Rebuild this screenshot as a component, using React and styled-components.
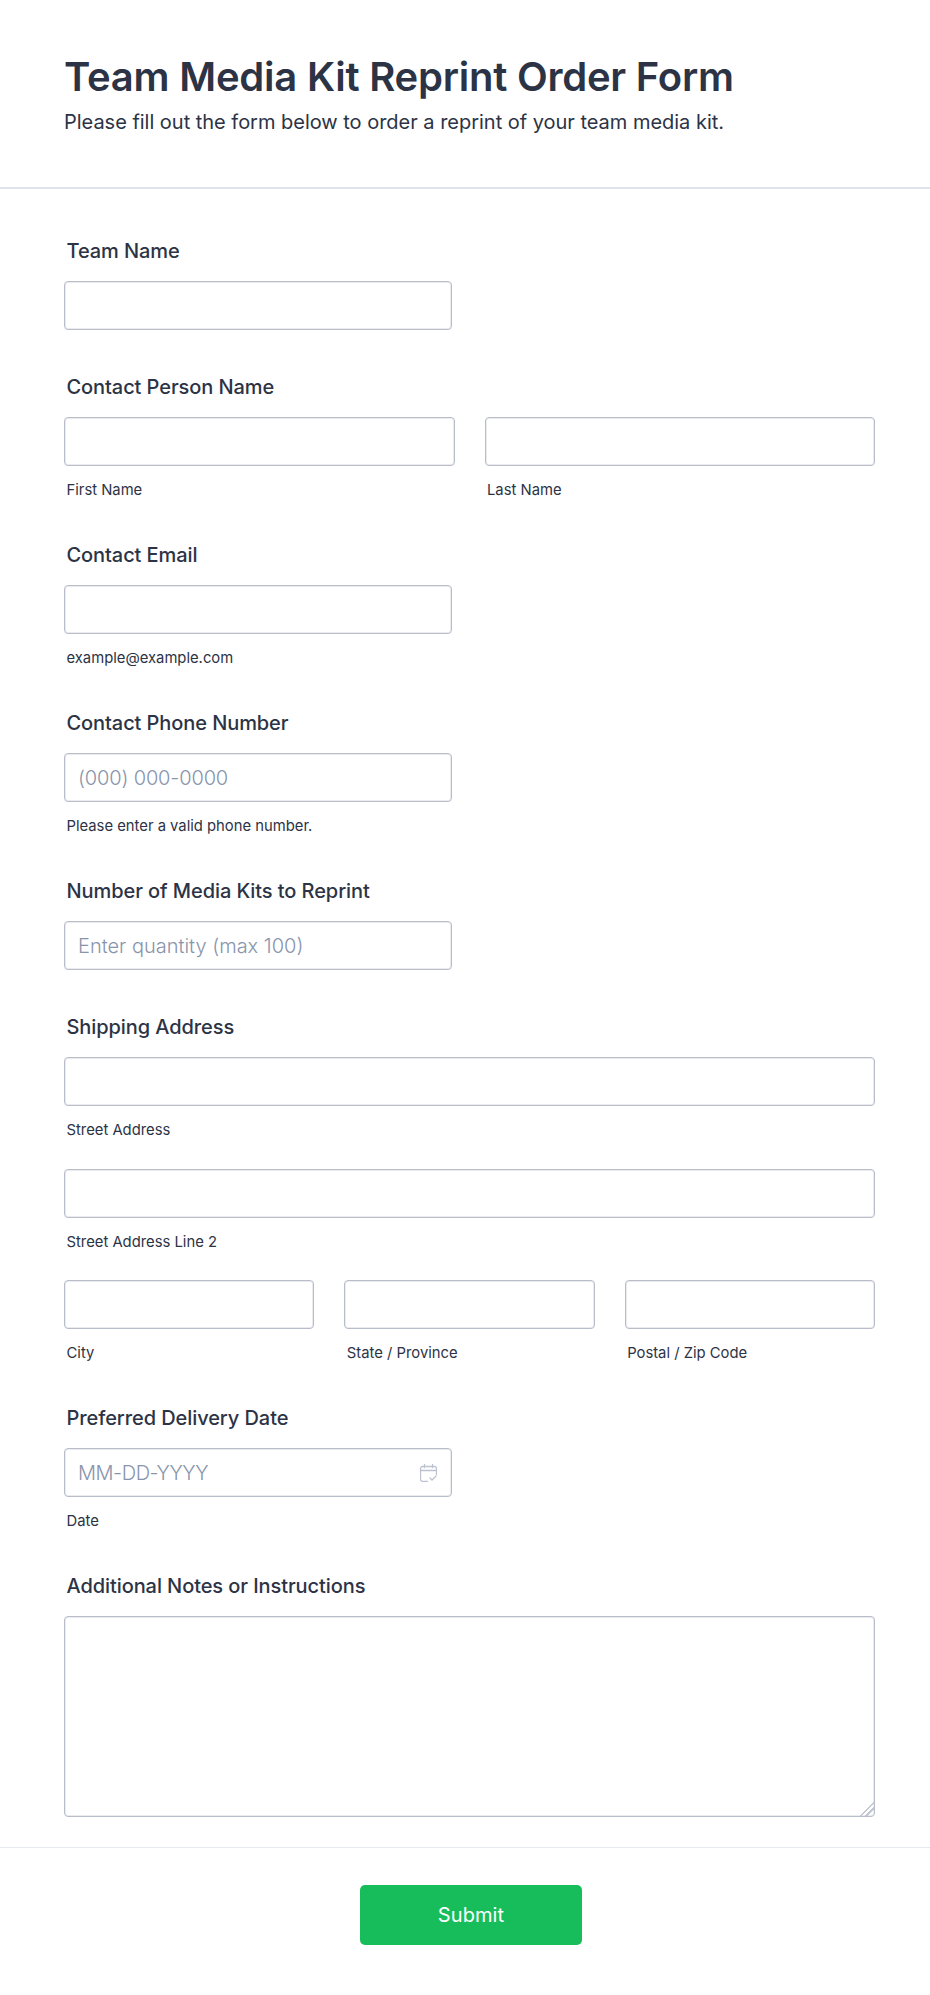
import React from "react";
import styled, { createGlobalStyle } from "styled-components";

const GlobalStyle = createGlobalStyle`
  * {
    box-sizing: border-box;
  }
  body {
    margin: 0;
    background: #fff;
    font-family: Inter, "Liberation Sans", sans-serif;
    color: #2c3345;
  }
`;

const Page = styled.div`
  display: flex;
  flex-direction: column;
  width: 100%;
  min-height: 1995px;
`;

const Header = styled.header`
  padding: 52px 55px 54px 64px;
  border-bottom: 2px solid #e0e2ec;
`;

const Title = styled.h1`
  margin: 0;
  font-size: 40px;
  line-height: 50px;
  font-weight: 600;
  letter-spacing: -0.23px;
`;

const Subtitle = styled.p`
  margin: 9px 0 0;
  font-size: 20px;
  line-height: 22px;
  font-weight: 400;
  letter-spacing: -0.02px;
`;

const Body = styled.main`
  display: flex;
  flex-direction: column;
  gap: 45px;
  padding: 50px 55px 30px 64px;
`;

const Field = styled.section`
  display: flex;
  flex-direction: column;
`;

const Label = styled.label`
  margin: 0 0 17px 2.5px;
  font-size: 20px;
  line-height: 25px;
  font-weight: 500;
  letter-spacing: -0.08px;
`;

const Row = styled.div`
  display: grid;
  grid-template-columns: repeat(${(p) => p.$cols}, 1fr);
  column-gap: 30px;
`;

const Stack = styled.div`
  display: flex;
  flex-direction: column;
  gap: 30.5px;
`;

const Cell = styled.div`
  display: flex;
  flex-direction: column;
  position: relative;
  width: ${(p) => (p.$short ? "388px" : "auto")};
`;

const Input = styled.input`
  display: block;
  width: 100%;
  height: 49px;
  padding: 0 13px;
  border: 1px solid #b8bdc9;
  border-radius: 4px;
  box-shadow: inset 0 0 0 1px rgba(184, 189, 201, 0.3);
  outline: none;
  background: #fff;
  font-family: inherit;
  font-size: 20px;
  font-weight: 300;
  letter-spacing: ${(p) => p.$spacing || "0"};
  color: #2c3345;

  &::placeholder {
    color: #8894ab;
    opacity: 1;
  }
`;

const Notes = styled.textarea`
  display: block;
  width: 100%;
  height: 201px;
  border: 1px solid #b8bdc9;
  border-radius: 4px;
  box-shadow: inset 0 0 0 1px rgba(184, 189, 201, 0.3);
  outline: none;
  background: #fff;
  resize: vertical;

  &::-webkit-resizer {
    background: linear-gradient(
      135deg,
      transparent 52%,
      #c3c8d4 52%,
      #c3c8d4 59%,
      transparent 59%,
      transparent 70%,
      #c3c8d4 70%,
      #c3c8d4 77%,
      transparent 77%
    );
  }
`;

const Sublabel = styled.span`
  margin: 17px 0 0 2.5px;
  font-size: 14.8px;
  line-height: 15px;
`;

const DateIcon = styled.svg`
  position: absolute;
  top: 16px;
  right: 15px;
  width: 17px;
  height: 18px;
  fill: none;
  stroke: #bcc2cf;
  stroke-width: 1.3;
  stroke-linecap: round;
  stroke-linejoin: round;
`;

const Footer = styled.footer`
  display: flex;
  justify-content: center;
  padding: 37px 0 0 12px;
  border-top: 1px solid #e6e8f2;
`;

const Submit = styled.button`
  width: 222px;
  height: 60px;
  border: none;
  border-radius: 5px;
  background: #18bd5b;
  color: #fff;
  font-family: inherit;
  font-size: 20px;
  font-weight: 400;
  letter-spacing: 0.1px;
`;

const CalendarCheck = () => (
  <DateIcon viewBox="0 0 17 18">
    <path d="M7.5 17.5H3A2.5 2.5 0 0 1 .5 15V4.5a2 2 0 0 1 2-2h12a2 2 0 0 1 2 2v6" />
    <path d="M.5 6.5h16" />
    <path d="M4.5.5v3M12.5.5v3" />
    <path d="M10 14l2 2 4-4" />
  </DateIcon>
);

export default function App() {
  return (
    <Page>
      <GlobalStyle />
      <Header>
        <Title>Team Media Kit Reprint Order Form</Title>
        <Subtitle>Please fill out the form below to order a reprint of your team media kit.</Subtitle>
      </Header>
      <Body>
        <Field>
          <Label>Team Name</Label>
          <Cell $short>
            <Input />
          </Cell>
        </Field>
        <Field>
          <Label>Contact Person Name</Label>
          <Row $cols={2}>
            <Cell>
              <Input />
              <Sublabel>First Name</Sublabel>
            </Cell>
            <Cell>
              <Input />
              <Sublabel>Last Name</Sublabel>
            </Cell>
          </Row>
        </Field>
        <Field>
          <Label>Contact Email</Label>
          <Cell $short>
            <Input />
            <Sublabel>example@example.com</Sublabel>
          </Cell>
        </Field>
        <Field>
          <Label>Contact Phone Number</Label>
          <Cell $short>
            <Input placeholder="(000) 000-0000" $spacing="-0.15px" />
            <Sublabel>Please enter a valid phone number.</Sublabel>
          </Cell>
        </Field>
        <Field>
          <Label>Number of Media Kits to Reprint</Label>
          <Cell $short>
            <Input placeholder="Enter quantity (max 100)" />
          </Cell>
        </Field>
        <Field>
          <Label>Shipping Address</Label>
          <Stack>
            <Cell>
              <Input />
              <Sublabel>Street Address</Sublabel>
            </Cell>
            <Cell>
              <Input />
              <Sublabel>Street Address Line 2</Sublabel>
            </Cell>
            <Row $cols={3}>
              <Cell>
                <Input />
                <Sublabel>City</Sublabel>
              </Cell>
              <Cell>
                <Input />
                <Sublabel>State / Province</Sublabel>
              </Cell>
              <Cell>
                <Input />
                <Sublabel>Postal / Zip Code</Sublabel>
              </Cell>
            </Row>
          </Stack>
        </Field>
        <Field>
          <Label>Preferred Delivery Date</Label>
          <Cell $short>
            <Input placeholder="MM-DD-YYYY" $spacing="-0.45px" />
            <CalendarCheck />
            <Sublabel>Date</Sublabel>
          </Cell>
        </Field>
        <Field>
          <Label>Additional Notes or Instructions</Label>
          <Notes />
        </Field>
      </Body>
      <Footer>
        <Submit type="button">Submit</Submit>
      </Footer>
    </Page>
  );
}
